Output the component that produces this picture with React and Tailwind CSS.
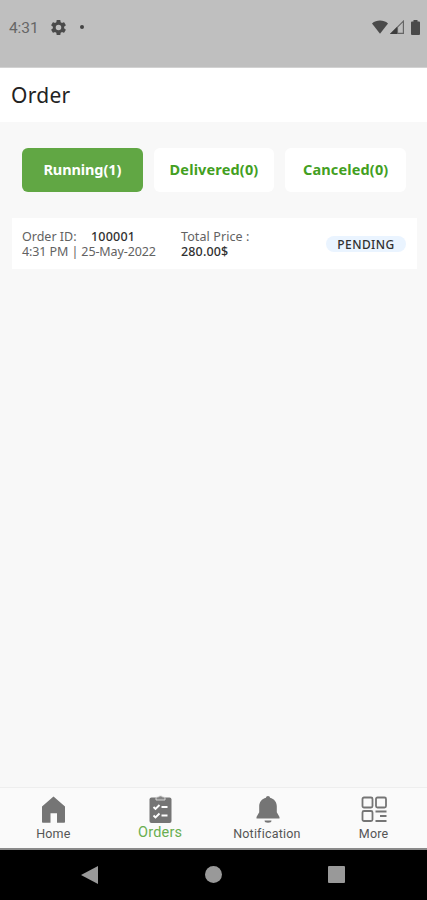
import React from 'react';

const tabs = [
  { label: 'Running(1)', active: true, tracking: 'tracking-[-0.1px]' },
  { label: 'Delivered(0)', active: false, tracking: 'tracking-[0.15px]' },
  { label: 'Canceled(0)', active: false, tracking: 'tracking-[0.15px]' },
];

function StatusBar() {
  return (
    <div className="flex h-[68px] shrink-0 items-start justify-between border-b border-[#d2d2d2] bg-[#bfbfbf] pt-[18px] pr-[7px] pl-[9px] font-[Roboto,sans-serif] text-[#4a4a4a]">
      <div className="flex h-[18px] items-center">
        <span className="w-[42px] pt-px text-[15.5px] leading-[18px] tracking-[-0.1px] text-[#666]">4:31</span>
        <svg className="size-[15px]" viewBox="2 2 20 20" fill="currentColor">
          <path fillRule="evenodd" d="M19.43 12.98c.04-.32.07-.64.07-.98s-.03-.66-.07-.98l2.11-1.65c.19-.15.24-.42.12-.64l-2-3.46c-.12-.22-.39-.3-.61-.22l-2.49 1c-.52-.4-1.08-.73-1.69-.98l-.38-2.65A.49.49 0 0 0 14 2h-4c-.25 0-.46.18-.49.42l-.38 2.65c-.61.25-1.17.59-1.69.98l-2.49-1c-.23-.09-.49 0-.61.22l-2 3.46c-.13.22-.07.49.12.64l2.11 1.65c-.04.32-.07.65-.07.98s.03.66.07.98l-2.11 1.65c-.19.15-.24.42-.12.64l2 3.46c.12.22.39.3.61.22l2.49-1c.52.4 1.08.73 1.69.98l.38 2.65c.03.24.24.42.49.42h4c.25 0 .46-.18.49-.42l.38-2.65c.61-.25 1.17-.59 1.69-.98l2.49 1c.23.09.49 0 .61-.22l2-3.46c.12-.22.07-.49-.12-.64zM12 15.700a3.700 3.700 0 1 1 0-7.400 3.700 3.700 0 0 1 0 7.400z" />
        </svg>
        <span className="ml-[14px] size-1 rounded-full bg-[#444]" />
      </div>
      <div className="flex h-[18px] items-center">
        <svg className="h-[14px] w-4" viewBox="0 0 16 14" fill="currentColor">
          <path d="M0 3.400C4.600-.4 11.400-.4 16 3.400L8 13.700z" />
        </svg>
        <svg className="ml-[2px] h-[14px] w-[14px]" viewBox="0 0 14 14">
          <path d="M1.200 13.400 13.400 1.200v12.200zM7.500 7v6.400" fill="none" stroke="#666" strokeWidth="1.200" />
          <path d="M0 14 7 7v7z" fill="#3d3d3d" />
        </svg>
        <svg className="ml-[7px] h-[15px] w-[9px]" viewBox="0 0 9 15" fill="currentColor">
          <path d="M2.500 1.600V0h4v1.600H8a1 1 0 0 1 1 1V14a1 1 0 0 1-1 1H1a1 1 0 0 1-1-1V2.600a1 1 0 0 1 1-1z" />
        </svg>
      </div>
    </div>
  );
}

function OrderCard() {
  return (
    <section className="mr-[10px] ml-[12px] mt-[26px] flex h-[51px] bg-white pt-[11px] pl-[10px] text-[12.5px] leading-[15px] text-[#626262]">
      <div className="w-[159px] whitespace-nowrap">
        <div className="flex">
          <span className="w-[69px]">Order ID:</span>
          <span className="font-medium tracking-[0.2px] text-[#303030]">100001</span>
        </div>
        <div className="tracking-[-0.1px]">4:31 PM | 25-May-2022</div>
      </div>
      <div className="w-[145px] whitespace-nowrap">
        <div className="tracking-[0.1px]">Total Price :</div>
        <div className="font-medium tracking-[0.15px] text-[#303030]">280.00$</div>
      </div>
      <span className="mt-[7px] flex h-4 w-20 items-center justify-center rounded-lg bg-[#eaf4ff] text-[12px] font-medium tracking-[0.45px] text-[#303030]">PENDING</span>
    </section>
  );
}

function NavItem({ label, active, children }) {
  return (
    <div className="flex flex-1 flex-col items-center pt-[7px] font-[Roboto,sans-serif]">
      <svg className="size-[30px] text-[#757575]" viewBox="0 0 30 30" fill="currentColor">{children}</svg>
      <span className={active ? 'mt-px text-[14.5px] leading-[14px] tracking-[0.2px] text-[#69ae50]' : 'mt-[2px] text-[12.5px] leading-[14px] tracking-[0.2px] text-[#555]'}>{label}</span>
    </div>
  );
}

export default function App() {
  return (
    <div className="flex h-[900px] w-[427px] flex-col overflow-hidden bg-[#f8f8f8] font-['Noto_Sans',sans-serif]">
      <StatusBar />
      <header className="flex h-[54px] shrink-0 items-center bg-white pl-[11px]">
        <h1 className="text-[21px] leading-[28px] tracking-[0.3px] text-[#222]">Order</h1>
      </header>
      <main className="flex-1">
        <div className="mt-[26px] flex gap-[11px] pr-[21px] pl-[22px]">
          {tabs.map((tab) => (
            <button
              key={tab.label}
              className={`h-[44px] flex-1 rounded-[6px] text-[14.5px] font-bold ${tab.tracking} ${tab.active ? 'bg-[#61a744] text-white' : 'bg-white text-[#43a01f]'}`}
            >
              {tab.label}
            </button>
          ))}
        </div>
        <OrderCard />
      </main>
      <nav className="flex h-[61px] shrink-0 border-t border-[#eeeeee] bg-[#fafafa]">
        <NavItem label="Home">
          <path d="M15.500 1.500 27 11.500V27a.8.8 0 0 1-.8.8H19v-9.500h-6.500v9.500H4.800A.8.8 0 0 1 4 27V11.500z" />
        </NavItem>
        <NavItem label="Orders" active>
          <path d="M6.500 2.500h18a2 2 0 0 1 2 2V26a2 2 0 0 1-2 2h-18a2 2 0 0 1-2-2V4.500a2 2 0 0 1 2-2z" />
          <path d="M11 5V3c0-.7.500-1 1.200-1h1a2.500 1.800 0 0 1 4.600 0h1c.7 0 1.200.3 1.200 1v2z" fill="#858585" stroke="#ddd" strokeWidth=".9" />
          <path d="m8.500 12 2 2 4-4M16.500 12h6M8.500 20.500l2 2 4-4M16.500 20.500h6" fill="none" stroke="#fff" strokeWidth="1.900" />
        </NavItem>
        <NavItem label="Notification">
          <path d="M16 1c1.100 0 2 .7 2 1.800 4.300 1 6.800 4.500 6.800 8.500v6l2.700 4.700v1.500h-23V22l2.700-4.700v-6c0-4 2.500-7.500 6.800-8.500C14 1.700 14.900 1 16 1z" />
          <path d="M12.500 25.500h7a3.500 2.200 0 0 1-7 0z" />
        </NavItem>
        <NavItem label="More">
          <g fill="none" stroke="currentColor" strokeWidth="1.800">
            <rect x="3.500" y="2.500" width="10" height="10" rx="1.500" />
            <rect x="17" y="2.500" width="10" height="10" rx="1.500" />
            <rect x="3.500" y="16" width="10" height="10" rx="1.500" />
            <path d="M16.500 16.500h11M21 21h6.500M16.500 26h11" />
          </g>
        </NavItem>
      </nav>
      <footer className="flex h-[52px] shrink-0 items-center border-t-2 border-[#8a8a8a] bg-black pb-px pl-[81px] text-[#999]">
        <svg className="h-[20px] w-[18px]" viewBox="0 0 18 20" fill="currentColor"><path d="M0 10 17 1v18z" /></svg>
        <span className="ml-[106px] size-[17px] rounded-full bg-[#999]" />
        <span className="ml-[106px] size-[17px] rounded-[1px] bg-[#999]" />
      </footer>
    </div>
  );
}
